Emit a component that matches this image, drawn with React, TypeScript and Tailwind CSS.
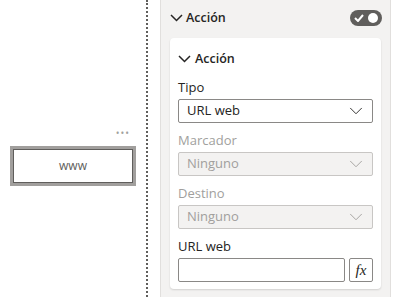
import React from "react";
import { ChevronDown } from "lucide-react";

const font = { fontFamily: '"Open Sans", "Noto Sans", sans-serif' };

const Caret = () => (
  <svg width="13" height="8" viewBox="0 0 13 8" className="shrink-0">
    <path d="M1 1 L6.5 6.5 L12 1" stroke="#252423" strokeWidth="1.5" fill="none" />
  </svg>
);

const Select = ({ value, disabled }: { value: string; disabled?: boolean }) => (
  <div
    className={`flex items-center justify-between h-[24px] pl-[8px] pr-[5px] rounded-[2px] border ${
      disabled ? "bg-[#f3f2f1] border-[#c8c6c4] text-[#a19f9d]" : "bg-white border-[#8a8886] text-[#252423]"
    } text-[13px]`}
  >
    <span>{value}</span>
    <ChevronDown size={22} strokeWidth={1} className={disabled ? "text-[#a19f9d]" : "text-[#252423]"} />
  </div>
);

const Field = ({ label, disabled, children }: { label: string; disabled?: boolean; children: React.ReactNode }) => (
  <div className="flex flex-col gap-[3px]">
    <div className={`text-[13px] leading-[18px] ${disabled ? "text-[#a19f9d]" : "text-[#252423]"}`}>{label}</div>
    {children}
  </div>
);

export default function App() {
  return (
    <div className="flex w-[394px] h-[297px] bg-white overflow-hidden" style={font}>
      <div className="w-[148px] shrink-0 border-r-2 border-dotted border-[#605e5c] flex flex-col pt-[127px] pl-[10px]">
        <div className="w-[125px] flex justify-end pr-[5px] text-[#a19f9d] text-[10px] leading-[12px] tracking-[1px]">•••</div>
        <div className="mt-[7px] w-[126px] h-[40px] border-[3px] border-[#a19f9d] flex items-center justify-center">
          <div className="w-full h-full border border-[#605e5c] flex items-center justify-center text-[12px] text-[#605e5c]">
            www
          </div>
        </div>
      </div>
      <div className="w-[12px] shrink-0" />
      <div className="w-[231px] shrink-0 bg-[#f3f2f1] border-x border-[#e1dfdd] flex flex-col px-[9px]">
        <div className="shrink-0 flex items-center justify-between h-[36px]">
          <div className="flex items-center gap-[3px] text-[12.5px] text-[#252423] font-semibold">
            <Caret />
            <span>Acción</span>
          </div>
          <div className="w-[32px] h-[16px] mr-[-1px] rounded-full bg-[#605e5c] flex items-center justify-between px-[4px]">
            <svg width="10" height="8" viewBox="0 0 10 8">
              <path d="M1 4 L4 7 L9 1" stroke="white" strokeWidth="2" fill="none" />
            </svg>
            <div className="w-[10px] h-[10px] rounded-full bg-white" />
          </div>
        </div>
        <div className="shrink-0 mt-[2px] bg-white rounded-[4px] shadow-[0_1px_2px_rgba(0,0,0,0.14)] px-[8px] pt-[10px] pb-[7px] flex flex-col gap-[8px]">
          <div className="flex items-center gap-[4px] text-[12.5px] text-[#252423] font-semibold h-[22px]">
            <Caret />
            <span>Acción</span>
          </div>
          <Field label="Tipo">
            <Select value="URL web" />
          </Field>
          <Field label="Marcador" disabled>
            <Select value="Ninguno" disabled />
          </Field>
          <Field label="Destino" disabled>
            <Select value="Ninguno" disabled />
          </Field>
          <Field label="URL web">
            <div className="flex gap-[4px]">
              <div className="flex-1 h-[24px] border border-[#8a8886] rounded-[2px] bg-white" />
              <div
                className="w-[24px] h-[24px] border border-[#8a8886] rounded-[2px] flex items-center justify-center italic text-[15px] text-[#252423]"
                style={{ fontFamily: '"Liberation Serif", serif' }}
              >
                fx
              </div>
            </div>
          </Field>
        </div>
        <div className="shrink-0 mt-[9px] bg-white rounded-[4px] h-[20px] shadow-[0_1px_2px_rgba(0,0,0,0.14)]" />
      </div>
    </div>
  );
}
